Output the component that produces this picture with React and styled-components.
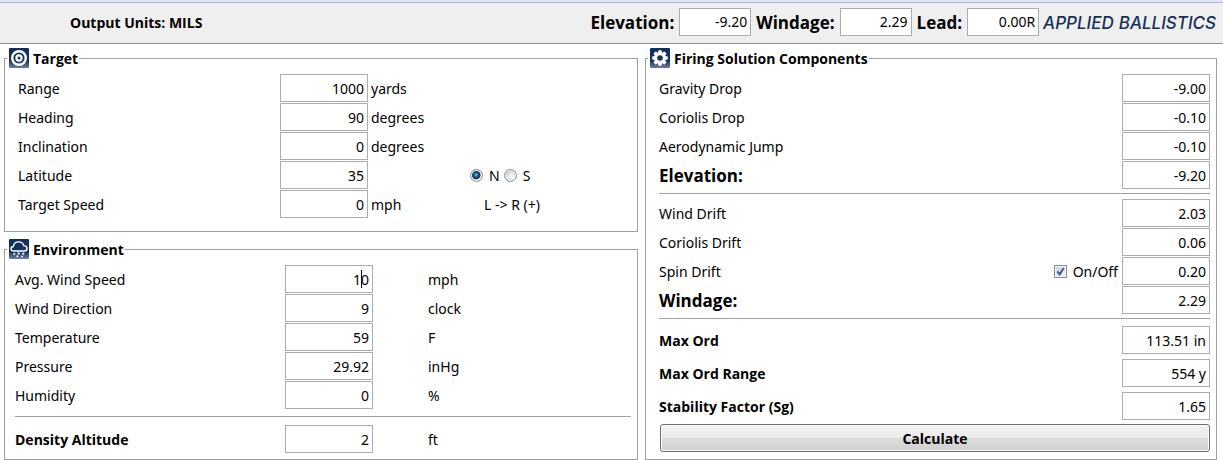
import React from "react";
import styled, { createGlobalStyle } from "styled-components";

const GlobalStyle = createGlobalStyle`
  *, *::before, *::after { box-sizing: border-box; }
  body {
    margin: 0;
    background: #fff;
    color: #000;
    font-family: "Noto Sans", "Open Sans", sans-serif;
    font-size: 14px;
    line-height: 20px;
  }
`;

const boldFamily = `"Open Sans", "Noto Sans", sans-serif`;

const TopBar = styled.header`
  display: flex;
  align-items: center;
  justify-content: space-between;
  height: 44px;
  padding: 4px 7px 4px 70px;
  background: #efefef;
  border-bottom: 1px solid #8e8f94;
  box-shadow: inset 0 2px #dfe6f5, inset 0 3px #b4bad6;
`;

const Units = styled.strong`
  padding-top: 2px;
  font-family: ${boldFamily};
`;

const Summary = styled.div`
  display: flex;
  align-items: center;
  gap: 4px;
`;

const SummaryFields = styled.div`
  display: flex;
  align-items: center;
  gap: 5px;
`;

const SummaryLabel = styled.label`
  padding-top: 2px;
  font-family: ${boldFamily};
  font-size: 17px;
  font-weight: 700;
  white-space: nowrap;
`;

const Field = styled.input`
  width: ${(p) => (p.$compact ? 72 : 88)}px;
  height: 28px;
  margin: 0;
  padding: 0 3px;
  border: 1px solid #abadb3;
  border-radius: 0;
  background: #fff;
  color: #000;
  font: inherit;
  text-align: right;
  outline: none;
`;

const Brand = styled.span`
  display: flex;
  gap: 5px;
  padding-top: 2px;
  color: #17315a;
  font-family: Inter, sans-serif;
  font-size: 17px;
  font-style: italic;
  font-weight: 500;
`;

const Main = styled.main`
  display: grid;
  grid-template-columns: minmax(0, 634fr) minmax(0, 572fr);
  gap: 7px;
  padding: 4px 6px 0 4px;
`;

const Column = styled.div`
  display: flex;
  flex-direction: column;
  gap: 7px;
`;

const Panel = styled.fieldset`
  min-width: 0;
  margin: 0;
  padding: ${(p) => p.$pad};
  border: 1px solid #a0a0a0;
`;

const Legend = styled.legend`
  display: flex;
  align-items: center;
  gap: 4px;
  height: 20px;
  margin-left: ${(p) => p.$inset}px;
  padding: 0 1px 0 2px;
  font-family: ${boldFamily};
  font-weight: 700;
`;

const Rows = styled.div`
  display: grid;
  gap: ${(p) => p.$gap || 1}px;
`;

const InputRow = styled.div`
  display: grid;
  grid-template-columns: ${(p) => p.$columns};
  align-items: center;
  height: 28px;
`;

const ResultRow = styled.div`
  display: flex;
  align-items: center;
  gap: 4px;
  height: 28px;
`;

const Text = styled.span`
  padding-top: 2px;
`;

const Label = styled.label`
  padding-top: 2px;
  font-family: ${(p) => (p.$strong || p.$total ? boldFamily : "inherit")};
  font-size: ${(p) => (p.$total ? 17 : 14)}px;
  font-weight: ${(p) => (p.$strong || p.$total ? 700 : 400)};
`;

const ResultLabel = styled(Label)`
  flex: 1;
`;

const Unit = styled(Text)`
  padding-left: ${(p) => p.$space}px;
`;

const Note = styled(Text)`
  padding-left: 14px;
`;

const Rule = styled.hr`
  height: 1px;
  margin: ${(p) => p.$margin};
  border: 0;
  background: #a0a0a0;
`;

const Hemisphere = styled.div`
  display: flex;
  gap: 4px;
`;

const Choice = styled.label`
  display: flex;
  align-items: center;
  gap: 6px;
`;

const Radio = styled.input`
  appearance: none;
  width: 13px;
  height: 13px;
  margin: 0;
  border: 1px solid #8e8f8f;
  border-radius: 50%;
  background: radial-gradient(circle at 60% 60%, #f4f4f4 20%, #c4c8cc 65%);
  box-shadow: inset 0 0 0 1px #f4f4f4;
  &:checked {
    background: radial-gradient(circle at 46% 44%, #8fd3f0 0, #1f6f9f 20%, #0b2f4d 46%, #dfe3e6 58%);
  }
`;

const CheckBoxHolder = styled.span`
  position: relative;
  display: flex;
`;

const CheckBox = styled.input`
  appearance: none;
  width: 13px;
  height: 13px;
  margin: 0;
  border: 1px solid #8e8f8f;
  background: linear-gradient(135deg, #cbcfd5, #f6f6f6);
  box-shadow: inset 0 0 0 1px #f4f4f4;
  & + svg { visibility: hidden; }
  &:checked + svg { visibility: visible; }
`;

const CheckMark = styled.svg`
  position: absolute;
  inset: 0;
  pointer-events: none;
`;

const CaretHolder = styled.span`
  position: relative;
  display: flex;
`;

const Caret = styled.span`
  position: absolute;
  top: 5px;
  right: 11px;
  width: 1px;
  height: 18px;
  background: #000;
`;

const CalculateButton = styled.button`
  display: block;
  width: calc(100% - 1px);
  height: 28px;
  margin: 4px 0 0 1px;
  padding: 1px 0 0;
  border: 1px solid #707070;
  border-radius: 3px;
  background: linear-gradient(#f2f2f2, #ebebeb 49%, #dddddd 50%, #cfcfcf);
  box-shadow: inset 0 0 0 1px #fafafa;
  color: #000;
  font: inherit;
  font-family: ${boldFamily};
  font-weight: 700;
`;

const IconSvg = ({ id, children }) => (
  <svg width="20" height="20" viewBox="0 0 20 20" aria-hidden="true">
    <defs>
      <linearGradient id={id} x1="0" y1="0" x2="0" y2="1">
        <stop offset="0" stopColor="#0f2d5e" />
        <stop offset="0.65" stopColor="#17335f" />
        <stop offset="1" stopColor="#747e9f" />
      </linearGradient>
    </defs>
    <rect width="20" height="20" rx="1" fill={`url(#${id})`} />
    {children}
  </svg>
);

const TargetIcon = () => (
  <IconSvg id="target-fill">
    <circle cx="10" cy="10" r="6.800" fill="none" stroke="#fff" strokeWidth="2.400" />
    <circle cx="10" cy="10" r="2.600" fill="none" stroke="#fff" strokeWidth="2.200" />
  </IconSvg>
);

const CloudIcon = () => (
  <IconSvg id="cloud-fill">
    <path
      d="M5.2 12H4.5C2.8 12 2 10.900 2 9.700C2 8.300 3 7.500 4.400 7.500C4.700 4.800 6.900 2.900 9.700 2.900C12.300 2.900 14.200 4.500 14.700 6.600C16.700 6.600 18 7.800 18 9.500C18 11 16.900 12 15.300 12H5.200Z"
      fill="none"
      stroke="#fff"
      strokeWidth="1.4"
    />
    <g fill="#fff">
      <circle cx="5.300" cy="15" r="1.100" />
      <circle cx="9.700" cy="14.400" r="1.100" />
      <circle cx="14.300" cy="14.700" r="1.100" />
      <circle cx="8.400" cy="17.300" r="1" />
      <circle cx="13" cy="17.500" r="0.900" />
    </g>
  </IconSvg>
);

const GearIcon = () => (
  <IconSvg id="gear-fill">
    <g fill="#fff">
      {[0, 45, 90, 135].map((angle) => (
        <rect key={angle} x="8.200" y="2.200" width="3.600" height="15.600" rx="0.800" transform={`rotate(${angle} 10 10)`} />
      ))}
      <circle cx="10" cy="10" r="6" />
    </g>
    <circle cx="10" cy="10" r="2.800" fill="#17335f" />
  </IconSvg>
);

const TARGET_COLUMNS = "262px 88px 102px 1fr";
const ENVIRONMENT_COLUMNS = "270px 88px 1fr";

const conditions = [
  { id: "wind-speed", label: "Avg. Wind Speed", value: "10", unit: "mph", caret: true },
  { id: "wind-direction", label: "Wind Direction", value: "9", unit: "clock" },
  { id: "temperature", label: "Temperature", value: "59", unit: "F" },
  { id: "pressure", label: "Pressure", value: "29.92", unit: "inHg" },
  { id: "humidity", label: "Humidity", value: "0", unit: "%" },
];

const TargetRow = ({ id, label, value, unit, children }) => (
  <InputRow $columns={TARGET_COLUMNS}>
    <Label htmlFor={id}>{label}</Label>
    <Field id={id} defaultValue={value} />
    <Unit $space={3}>{unit}</Unit>
    {children}
  </InputRow>
);

const EnvironmentRow = ({ id, label, value, unit, strong, caret }) => (
  <InputRow $columns={ENVIRONMENT_COLUMNS}>
    <Label htmlFor={id} $strong={strong}>{label}</Label>
    <CaretHolder>
      <Field id={id} defaultValue={value} />
      {caret && <Caret />}
    </CaretHolder>
    <Unit $space={55}>{unit}</Unit>
  </InputRow>
);

const Result = ({ id, label, value, strong, total, children }) => (
  <ResultRow>
    <ResultLabel htmlFor={id} $strong={strong} $total={total}>{label}</ResultLabel>
    {children}
    <Field id={id} value={value} readOnly />
  </ResultRow>
);

export default function App() {
  return (
    <>
      <GlobalStyle />
      <TopBar>
        <Units>Output Units: MILS</Units>
        <Summary>
          <SummaryFields>
            <SummaryLabel htmlFor="sum-elevation">Elevation:</SummaryLabel>
            <Field id="sum-elevation" $compact value="-9.20" readOnly />
            <SummaryLabel htmlFor="sum-windage">Windage:</SummaryLabel>
            <Field id="sum-windage" $compact value="2.29" readOnly />
            <SummaryLabel htmlFor="sum-lead">Lead:</SummaryLabel>
            <Field id="sum-lead" $compact value="0.00R" readOnly />
          </SummaryFields>
          <Brand><span>APPLIED</span><span>BALLISTICS</span></Brand>
        </Summary>
      </TopBar>
      <Main>
        <Column>
          <Panel $pad="6px 6px 13px 13px">
            <Legend $inset={-11}><TargetIcon /><Text>Target</Text></Legend>
            <Rows>
              <TargetRow id="range" label="Range" value="1000" unit="yards" />
              <TargetRow id="heading" label="Heading" value="90" unit="degrees" />
              <TargetRow id="inclination" label="Inclination" value="0" unit="degrees" />
              <TargetRow id="latitude" label="Latitude" value="35">
                <Hemisphere>
                  <Choice><Radio type="radio" name="hemisphere" defaultChecked /><Text>N</Text></Choice>
                  <Choice><Radio type="radio" name="hemisphere" /><Text>S</Text></Choice>
                </Hemisphere>
              </TargetRow>
              <TargetRow id="target-speed" label="Target Speed" value="0" unit="mph">
                <Note>{"L -> R (+)"}</Note>
              </TargetRow>
            </Rows>
          </Panel>
          <Panel $pad="6px 6px 6px 10px">
            <Legend $inset={-8}><CloudIcon /><Text>Environment</Text></Legend>
            <Rows>
              {conditions.map((c) => <EnvironmentRow key={c.id} {...c} />)}
            </Rows>
            <Rule $margin="7px 0 8px" />
            <EnvironmentRow id="density" label="Density Altitude" value="2" unit="ft" strong />
          </Panel>
        </Column>
        <Panel $pad="6px 6px 7px 13px">
          <Legend $inset={-11}><GearIcon /><Text>Firing Solution Components</Text></Legend>
          <Rows>
            <Result id="gravity" label="Gravity Drop" value="-9.00" />
            <Result id="coriolis-drop" label="Coriolis Drop" value="-0.10" />
            <Result id="jump" label="Aerodynamic Jump" value="-0.10" />
            <Result id="elevation" label="Elevation:" value="-9.20" total />
          </Rows>
          <Rule $margin="4px 0 5px" />
          <Rows>
            <Result id="wind-drift" label="Wind Drift" value="2.03" />
            <Result id="coriolis-drift" label="Coriolis Drift" value="0.06" />
            <Result id="spin-drift" label="Spin Drift" value="0.20">
              <Choice>
                <CheckBoxHolder>
                  <CheckBox type="checkbox" defaultChecked />
                  <CheckMark width="13" height="13" viewBox="0 0 13 13" aria-hidden="true">
                    <path d="M3.500 6.500L5.700 9.200L9.700 3" fill="none" stroke="#43549b" strokeWidth="2" />
                  </CheckMark>
                </CheckBoxHolder>
                <Text>On/Off</Text>
              </Choice>
            </Result>
            <Result id="windage" label="Windage:" value="2.29" total />
          </Rows>
          <Rule $margin="4px 0 7px" />
          <Rows $gap={5}>
            <Result id="max-ord" label="Max Ord" value="113.51 in" strong />
            <Result id="max-ord-range" label="Max Ord Range" value="554 y" strong />
            <Result id="stability" label="Stability Factor (Sg)" value="1.65" strong />
          </Rows>
          <CalculateButton type="button">Calculate</CalculateButton>
        </Panel>
      </Main>
    </>
  );
}
